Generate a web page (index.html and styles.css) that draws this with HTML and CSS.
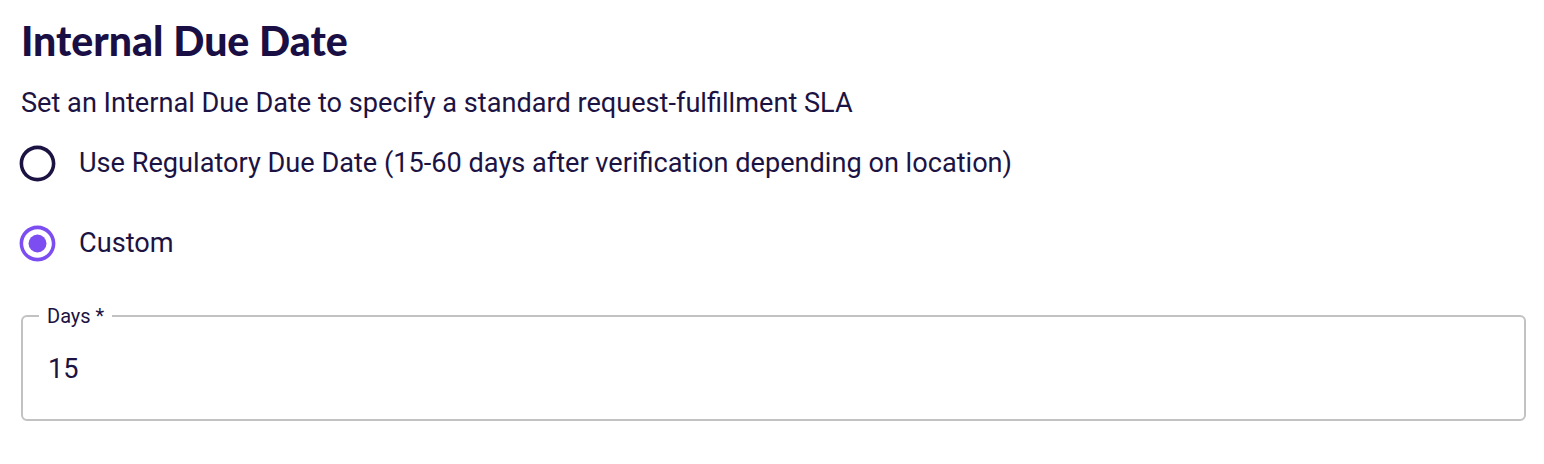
FILE: index.html
```html
<!DOCTYPE html>
<html>
<head>
<meta charset="utf-8">
<link rel="stylesheet" href="styles.css">
</head>
<body>
<div class="panel">
  <h1 class="title">Internal Due Date</h1>
  <p class="desc">Set an Internal Due Date to specify a standard request-fulfillment SLA</p>
  <div class="options">
    <label class="option">
      <svg class="radio" viewBox="0 0 24 24"><path fill="#1c1343" d="M12 2C6.48 2 2 6.48 2 12s4.48 10 10 10 10-4.48 10-10S17.52 2 12 2zm0 18c-4.42 0-8-3.58-8-8s3.58-8 8-8 8 3.58 8 8-3.58 8-8 8z"/></svg>
      <span class="option-text">Use Regulatory Due Date (15-60 days after verification depending on location)</span>
    </label>
    <label class="option">
      <svg class="radio" viewBox="0 0 24 24"><path fill="#7c4df1" d="M12 2C6.48 2 2 6.48 2 12s4.48 10 10 10 10-4.48 10-10S17.52 2 12 2zm0 18c-4.42 0-8-3.58-8-8s3.58-8 8-8 8 3.58 8 8-3.58 8-8 8z"/><circle fill="#7c4df1" cx="12" cy="12" r="5"/></svg>
      <span class="option-text">Custom</span>
    </label>
  </div>
  <fieldset class="field">
    <legend class="field-label">Days *</legend>
    <div class="field-value">15</div>
  </fieldset>
</div>
</body>
</html>
```
FILE: styles.css
```css
html, body {
  margin: 0;
  background: #ffffff;
}
.panel {
  width: 1505px;
  padding: 16px 0 0 21px;
  color: #1c1343;
  font-family: Roboto, "Liberation Sans", sans-serif;
}
.title {
  margin: 0;
  font-family: Lato, "Liberation Sans", sans-serif;
  font-weight: 900;
  font-size: 41px;
  line-height: 49px;
  color: #1a0f45;
}
.desc {
  margin: 20px 0 0;
  font-size: 27.15px;
  line-height: 36px;
}
.options {
  display: flex;
  flex-direction: column;
  gap: 40px;
  margin-top: 22px;
}
.option {
  display: flex;
  align-items: center;
  height: 40px;
  margin-left: -5px;
}
.radio {
  width: 43px;
  height: 43px;
  flex: none;
}
.option-text {
  margin-left: 20px;
  font-size: 27.15px;
  line-height: 36px;
}
.field {
  margin: 41px 0 0;
  padding: 0 16px 0;
  border: 2px solid #c2c2c2;
  border-radius: 6px;
  height: 117px;
  box-sizing: border-box;
}
.field-label {
  padding: 0 8px;
  font-size: 20px;
  line-height: 24px;
}
.field-value {
  padding: 23px 0 0 9px;
  font-size: 27.15px;
  line-height: 36px;
}
```
